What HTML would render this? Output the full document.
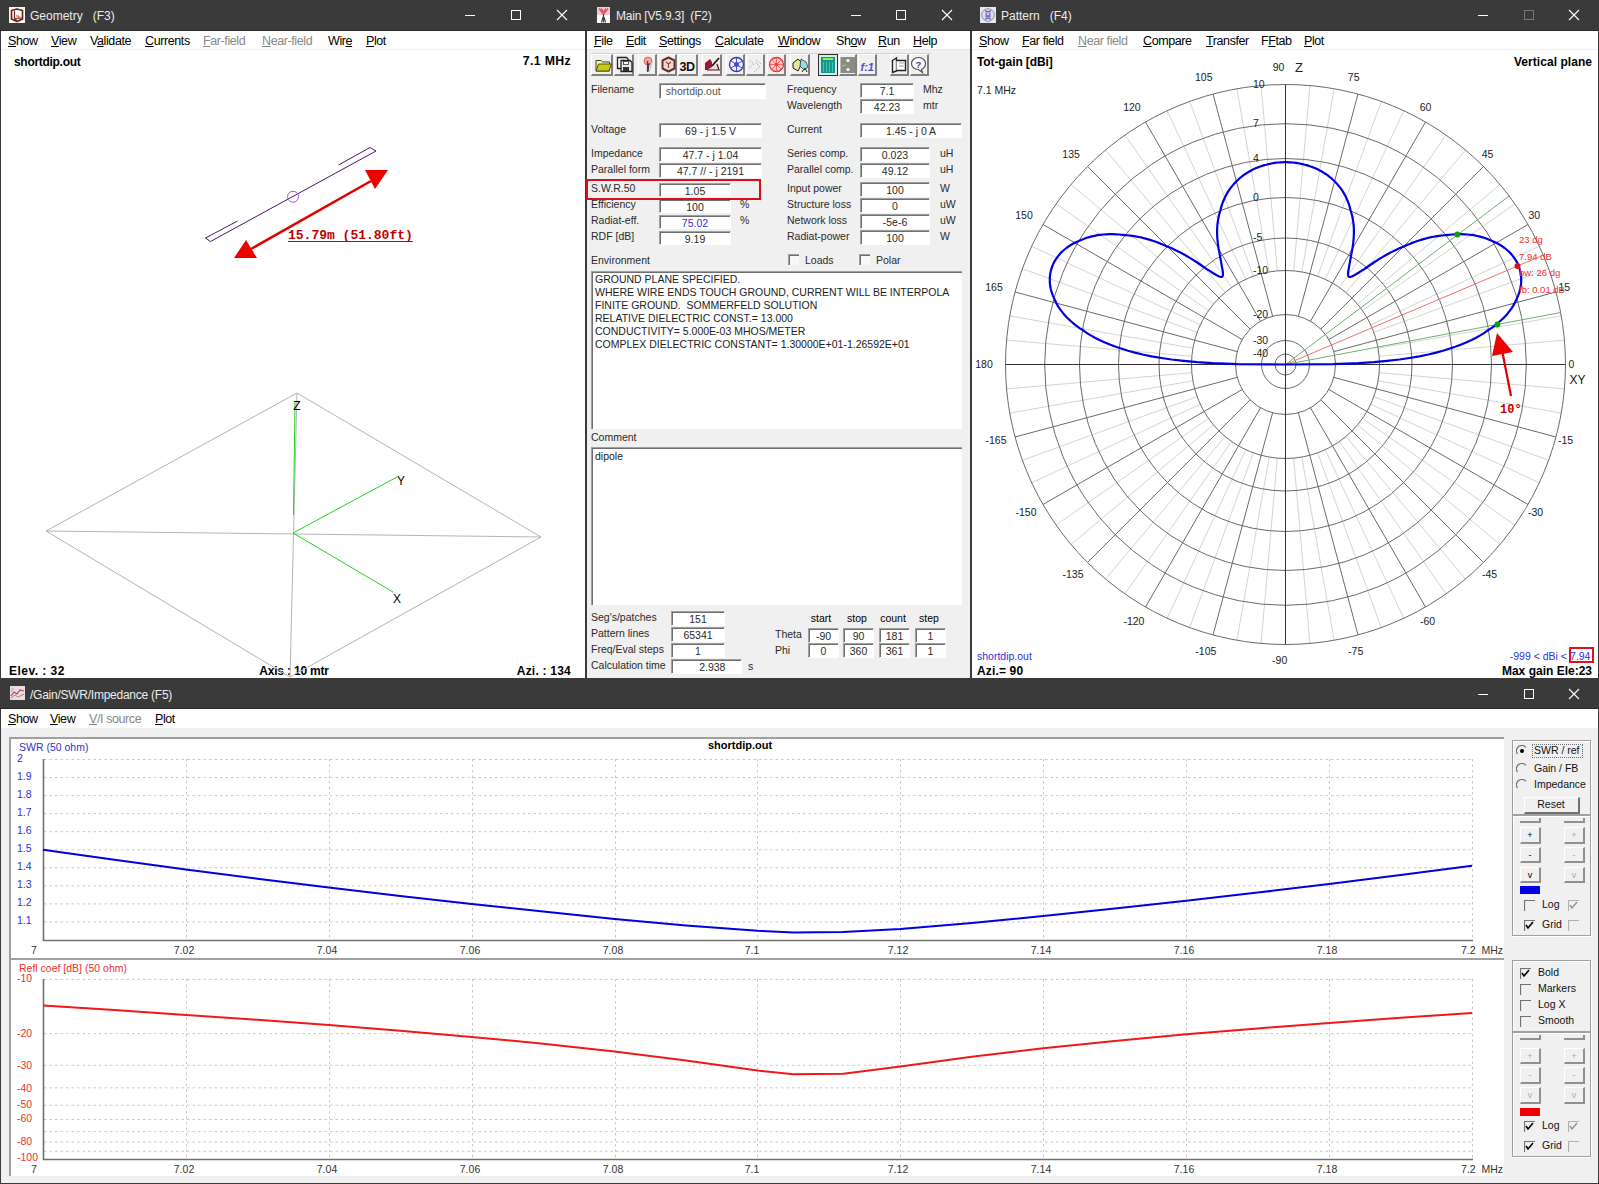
<!DOCTYPE html><html><head><meta charset="utf-8"><style>
html,body{margin:0;padding:0;}
body{width:1599px;height:1184px;overflow:hidden;position:relative;background:#3a3a3a;font-family:'Liberation Sans', sans-serif;}
.t{position:absolute;white-space:pre;line-height:1;}
u{text-decoration:underline;text-underline-offset:1px;text-decoration-skip-ink:none;}
.fld{position:absolute;background:#fff;border-top:1px solid #a0a0a0;border-left:1px solid #a0a0a0;border-right:1px solid #fff;border-bottom:1px solid #fff;box-shadow:inset 1px 1px 0 #6e6e6e;box-sizing:border-box;font-size:10.5px;line-height:15px;text-align:center;color:#000;white-space:pre;overflow:hidden;}
svg{position:absolute;}
</style></head><body><div style="position:absolute;left:0px;top:30px;width:1599px;height:1px;background:#2a2a2a"></div><div style="position:absolute;left:0px;top:708px;width:1599px;height:1px;background:#2a2a2a"></div><div style="position:absolute;left:1px;top:31px;width:584px;height:647px;background:#fff"></div><div style="position:absolute;left:1px;top:49px;width:584px;height:1px;background:#f0f0f0"></div><svg style="left:9px;top:7px" width="16" height="16"><rect x="0" y="0" width="16" height="16" fill="#fbf6f4"/><path d="M2.5 3.5L8 2L13.5 3.5V12L8 14.5L2.5 12Z" stroke="#5a2418" stroke-width="1.6" fill="none" stroke-linejoin="round"/><path d="M5.5 4V11.5M5.5 11.5L8 14M5.5 11.5L13 11" stroke="#6a2a20" stroke-width="1.2" fill="none"/><path d="M7 9h3v3" stroke="#b05050" stroke-width="1" fill="none"/></svg><div class="t" style="left:30px;top:9.5px;font-size:12px;color:#ececec;font-weight:400;font-family:'Liberation Sans', sans-serif;">Geometry &nbsp;&nbsp;(F3)</div><div style="position:absolute;left:465px;top:15px;width:10px;height:1px;background:#fff"></div><div style="position:absolute;left:511px;top:10px;width:8px;height:8px;border:1px solid #fff"></div><svg style="position:absolute;left:556px;top:9px" width="12" height="12"><path d="M1 1L11 11M11 1L1 11" stroke="#fff" stroke-width="1.1"/></svg><div class="t" style="left:8px;top:35px;font-size:12.5px;color:#000;font-weight:400;font-family:'Liberation Sans', sans-serif;letter-spacing:-0.4px"><u>S</u>how</div><div class="t" style="left:51px;top:35px;font-size:12.5px;color:#000;font-weight:400;font-family:'Liberation Sans', sans-serif;letter-spacing:-0.4px"><u>V</u>iew</div><div class="t" style="left:90px;top:35px;font-size:12.5px;color:#000;font-weight:400;font-family:'Liberation Sans', sans-serif;letter-spacing:-0.4px">V<u>a</u>lidate</div><div class="t" style="left:145px;top:35px;font-size:12.5px;color:#000;font-weight:400;font-family:'Liberation Sans', sans-serif;letter-spacing:-0.4px"><u>C</u>urrents</div><div class="t" style="left:203px;top:35px;font-size:12.5px;color:#888;font-weight:400;font-family:'Liberation Sans', sans-serif;letter-spacing:-0.4px"><u>F</u>ar-field</div><div class="t" style="left:262px;top:35px;font-size:12.5px;color:#888;font-weight:400;font-family:'Liberation Sans', sans-serif;letter-spacing:-0.4px"><u>N</u>ear-field</div><div class="t" style="left:328px;top:35px;font-size:12.5px;color:#000;font-weight:400;font-family:'Liberation Sans', sans-serif;letter-spacing:-0.4px">Wir<u>e</u></div><div class="t" style="left:366px;top:35px;font-size:12.5px;color:#000;font-weight:400;font-family:'Liberation Sans', sans-serif;letter-spacing:-0.4px"><u>P</u>lot</div><div class="t" style="left:14px;top:56px;font-size:12px;color:#000;font-weight:700;font-family:'Liberation Sans', sans-serif;letter-spacing:-0.3px">shortdip.out</div><div class="t" style="right:1028px;top:55.4px;font-size:12.3px;color:#000;font-weight:700;font-family:'Liberation Sans', sans-serif;letter-spacing:0.35px">7.1 MHz</div><div class="t" style="left:9px;top:664.5px;font-size:12px;color:#000;font-weight:700;font-family:'Liberation Sans', sans-serif;letter-spacing:0.47px">Elev. : 32</div><div class="t" style="left:294px;transform:translateX(-50%);top:664.5px;font-size:12px;color:#000;font-weight:700;font-family:'Liberation Sans', sans-serif;letter-spacing:-0.18px">Axis : 10 mtr</div><div class="t" style="right:1028px;top:664.5px;font-size:12px;color:#000;font-weight:700;font-family:'Liberation Sans', sans-serif;letter-spacing:0.22px">Azi. : 134</div><svg style="left:0;top:0" width="586" height="678"><path d="M46 531L297 393L541 537L290 677" stroke="#b4b4b4" stroke-width="1" fill="none"/><path d="M46 531L290 677" stroke="#b4b4b4" stroke-width="1" fill="none"/><path d="M46 531L541 537M297 393L290 677" stroke="#b4b4b4" stroke-width="1" fill="none"/><path d="M293.5 515L295 402M293 533L397 477M293 533L393 592" stroke="#20d020" stroke-width="1" fill="none"/><path d="M205.5 238L210.5 241.5L376 151L370 147.5L338.5 165M205.5 238L237.5 221" stroke="#4a1868" stroke-width="1" fill="none" stroke-linejoin="round"/><circle cx="293" cy="196.7" r="5.5" stroke="#b050f0" stroke-width="1" fill="none"/><path d="M251 249L371 181" stroke="#e00000" stroke-width="2.5"/><path d="M234 258L257 258L246 240Z M365 170L388 170L375 189Z" fill="#ee0000"/></svg><div class="t" style="left:297px;transform:translateX(-50%);top:400px;font-size:12px;color:#000;font-weight:400;font-family:'Liberation Sans', sans-serif;">Z</div><div class="t" style="left:401px;transform:translateX(-50%);top:475px;font-size:12px;color:#000;font-weight:400;font-family:'Liberation Sans', sans-serif;">Y</div><div class="t" style="left:397px;transform:translateX(-50%);top:593px;font-size:12px;color:#000;font-weight:400;font-family:'Liberation Sans', sans-serif;">X</div><div class="t" style="left:288px;top:229px;font-size:13px;color:#c00000;font-weight:700;font-family:'Liberation Mono', monospace;"><u style="text-underline-offset:2px">15.79m (51.80ft)</u></div><div style="position:absolute;left:587px;top:31px;width:383px;height:647px;background:#f0f0f0"></div><div style="position:absolute;left:587px;top:31px;width:383px;height:18px;background:#fff"></div><div style="position:absolute;left:587px;top:49px;width:383px;height:1px;background:#e8e8e8"></div><svg style="left:597px;top:7px" width="13" height="16"><rect x="0" y="0" width="13" height="16" fill="#fafafa"/><rect x="0" y="0" width="13" height="8" fill="#f8c8cc"/><path d="M2 1.5L6.5 7.5L11 1.5M4 1.5L6.5 5M9 1.5L6.5 5" stroke="#e05060" stroke-width="1.3" fill="none"/><path d="M6.5 7v8.5M4.5 15.5L6 10M8.5 15.5L7 10" stroke="#4a3a3a" stroke-width="1.1" fill="none"/></svg><div class="t" style="left:616px;top:9.5px;font-size:12px;color:#ececec;font-weight:400;font-family:'Liberation Sans', sans-serif;letter-spacing:-0.2px">Main [V5.9.3] &nbsp;(F2)</div><div style="position:absolute;left:851px;top:15px;width:10px;height:1px;background:#fff"></div><div style="position:absolute;left:896px;top:10px;width:8px;height:8px;border:1px solid #fff"></div><svg style="position:absolute;left:941px;top:9px" width="12" height="12"><path d="M1 1L11 11M11 1L1 11" stroke="#fff" stroke-width="1.1"/></svg><div class="t" style="left:594px;top:35px;font-size:12.5px;color:#000;font-weight:400;font-family:'Liberation Sans', sans-serif;letter-spacing:-0.4px"><u>F</u>ile</div><div class="t" style="left:626px;top:35px;font-size:12.5px;color:#000;font-weight:400;font-family:'Liberation Sans', sans-serif;letter-spacing:-0.4px"><u>E</u>dit</div><div class="t" style="left:659px;top:35px;font-size:12.5px;color:#000;font-weight:400;font-family:'Liberation Sans', sans-serif;letter-spacing:-0.4px"><u>S</u>ettings</div><div class="t" style="left:715px;top:35px;font-size:12.5px;color:#000;font-weight:400;font-family:'Liberation Sans', sans-serif;letter-spacing:-0.4px"><u>C</u>alculate</div><div class="t" style="left:778px;top:35px;font-size:12.5px;color:#000;font-weight:400;font-family:'Liberation Sans', sans-serif;letter-spacing:-0.4px"><u>W</u>indow</div><div class="t" style="left:836px;top:35px;font-size:12.5px;color:#000;font-weight:400;font-family:'Liberation Sans', sans-serif;letter-spacing:-0.4px">Sh<u>o</u>w</div><div class="t" style="left:878px;top:35px;font-size:12.5px;color:#000;font-weight:400;font-family:'Liberation Sans', sans-serif;letter-spacing:-0.4px"><u>R</u>un</div><div class="t" style="left:913px;top:35px;font-size:12.5px;color:#000;font-weight:400;font-family:'Liberation Sans', sans-serif;letter-spacing:-0.4px"><u>H</u>elp</div><div style="position:absolute;left:591px;top:54px;width:22px;height:22px;box-sizing:border-box;border-top:1px solid #fff;border-left:1px solid #fff;border-right:2px solid #808080;border-bottom:2px solid #808080;background:#f0f0f0"></div><div style="position:absolute;left:614px;top:54px;width:20px;height:22px;box-sizing:border-box;border-top:1px solid #fff;border-left:1px solid #fff;border-right:2px solid #808080;border-bottom:2px solid #808080;background:#f0f0f0"></div><div style="position:absolute;left:638px;top:54px;width:19px;height:22px;box-sizing:border-box;border-top:1px solid #fff;border-left:1px solid #fff;border-right:2px solid #808080;border-bottom:2px solid #808080;background:#f0f0f0"></div><div style="position:absolute;left:658px;top:54px;width:19px;height:22px;box-sizing:border-box;border-top:1px solid #fff;border-left:1px solid #fff;border-right:2px solid #808080;border-bottom:2px solid #808080;background:#f0f0f0"></div><div style="position:absolute;left:678px;top:54px;width:20px;height:22px;box-sizing:border-box;border-top:1px solid #fff;border-left:1px solid #fff;border-right:2px solid #808080;border-bottom:2px solid #808080;background:#f0f0f0"></div><div style="position:absolute;left:702px;top:54px;width:20px;height:22px;box-sizing:border-box;border-top:1px solid #fff;border-left:1px solid #fff;border-right:2px solid #808080;border-bottom:2px solid #808080;background:#f0f0f0"></div><div style="position:absolute;left:726px;top:54px;width:19px;height:22px;box-sizing:border-box;border-top:1px solid #fff;border-left:1px solid #fff;border-right:2px solid #808080;border-bottom:2px solid #808080;background:#f0f0f0"></div><div style="position:absolute;left:746px;top:54px;width:19px;height:22px;box-sizing:border-box;border-top:1px solid #fff;border-left:1px solid #fff;border-right:2px solid #808080;border-bottom:2px solid #808080;background:#f0f0f0"></div><div style="position:absolute;left:767px;top:54px;width:19px;height:22px;box-sizing:border-box;border-top:1px solid #fff;border-left:1px solid #fff;border-right:2px solid #808080;border-bottom:2px solid #808080;background:#f0f0f0"></div><div style="position:absolute;left:790px;top:54px;width:20px;height:22px;box-sizing:border-box;border-top:1px solid #fff;border-left:1px solid #fff;border-right:2px solid #808080;border-bottom:2px solid #808080;background:#f0f0f0"></div><div style="position:absolute;left:818px;top:54px;width:19px;height:22px;box-sizing:border-box;border-top:1px solid #fff;border-left:1px solid #fff;border-right:2px solid #808080;border-bottom:2px solid #808080;background:#f0f0f0"></div><div style="position:absolute;left:839px;top:54px;width:18px;height:22px;box-sizing:border-box;border-top:1px solid #fff;border-left:1px solid #fff;border-right:2px solid #808080;border-bottom:2px solid #808080;background:#f0f0f0"></div><div style="position:absolute;left:858px;top:54px;width:19px;height:22px;box-sizing:border-box;border-top:1px solid #fff;border-left:1px solid #fff;border-right:2px solid #808080;border-bottom:2px solid #808080;background:#f0f0f0"></div><div style="position:absolute;left:890px;top:54px;width:19px;height:22px;box-sizing:border-box;border-top:1px solid #fff;border-left:1px solid #fff;border-right:2px solid #808080;border-bottom:2px solid #808080;background:#f0f0f0"></div><div style="position:absolute;left:910px;top:54px;width:19px;height:22px;box-sizing:border-box;border-top:1px solid #fff;border-left:1px solid #fff;border-right:2px solid #808080;border-bottom:2px solid #808080;background:#f0f0f0"></div><svg style="left:0;top:0" width="970" height="80"><path d="M591 53.5H931" stroke="#d4d4d4" stroke-width="1"/><path d="M596 60.5h5l1.5 1.5h7v9h-13.5z" fill="#f4f4c0" stroke="#404020" stroke-width="1"/><path d="M596 71l2.5-7h13l-2.5 7z" fill="#c8cc10" stroke="#505010" stroke-width="1"/><path d="M617.5 57.5h9l2 2v9h-11z" fill="#f8f8f8" stroke="#202020" stroke-width="1.3"/><path d="M621 60.5h9l2 2v9h-11z" fill="#e8e8e8" stroke="#202020" stroke-width="1.3"/><rect x="623.5" y="61.5" width="5" height="3" fill="#fff" stroke="#333" stroke-width="0.8"/><rect x="623" y="67" width="6" height="4" fill="#333"/><circle cx="648" cy="61" r="4" fill="#f4a0a0" stroke="#e05050" stroke-width="0.8"/><path d="M647.5 61v11M649 63l-1 9" stroke="#404040" stroke-width="1.2"/><path d="M652 62l-3 10" stroke="#c0c0c0" stroke-width="1"/><path d="M668.5 57.5l6 3v8l-6 3l-6-3v-8z" fill="#f0d8d0" stroke="#6a3028" stroke-width="2" stroke-linejoin="round"/><path d="M666 62l2.5 2l2.5-2M668.5 64v4" stroke="#8a4a40" stroke-width="1.2" fill="none"/><text x="679.5" y="71" font-family="Liberation Sans" font-weight="700" font-size="12.5" fill="#111" letter-spacing="-0.5">3D</text><path d="M705 63l5-4l2 3v8h-7z" fill="#a01830"/><path d="M707 70h12l-2-6" stroke="#401018" stroke-width="1.2" fill="#f0d8e0"/><path d="M712 66l7-8" stroke="#301010" stroke-width="1.8"/><circle cx="736.5" cy="64.5" r="7" fill="#eef" stroke="#3838a0" stroke-width="1.3"/><path d="M736.5 58v13M731 61l11 7M742 61l-11 7" stroke="#4040d0" stroke-width="0.9"/><circle cx="736.5" cy="64.5" r="2.5" fill="#4a4ad0"/><path d="M749 68l5-4l-5-4M754 72l6-5l-5-5M756 60l5 4" stroke="#b0b0b0" stroke-width="1" stroke-dasharray="1.5 1" fill="none"/><circle cx="776.5" cy="64.5" r="7" fill="#fcd0d0" stroke="#e83030" stroke-width="1.3"/><path d="M769.5 64.5h14M776.5 57.5v14M771.5 59.5l10 10M781.5 59.5l-10 10" stroke="#f06060" stroke-width="0.9"/><circle cx="776.5" cy="64.5" r="2" fill="#f04040"/><path d="M793 63l5-4l4 4l-4 8l-5-3z" fill="#e8e890" stroke="#202020" stroke-width="1"/><path d="M801 59l5 3l2 5l-4 3l-4-4z" fill="#90e0f0" stroke="#303030" stroke-width="0.8"/><path d="M802 72l3-4l2 4" stroke="#202020" stroke-width="1" fill="none"/><rect x="818.5" y="54.5" width="19" height="21" fill="#d8e8e8" stroke="#303030" stroke-width="1"/><rect x="821" y="57" width="14" height="16" fill="#18968a"/><path d="M823 59h10" stroke="#70ff50" stroke-width="2"/><path d="M823.5 62v10M826.5 62v10M829.5 62v10M832.5 62v10" stroke="#40c8b8" stroke-width="0.9"/><rect x="840.5" y="57" width="15" height="16" fill="#8c8c80"/><circle cx="848" cy="60.5" r="1.6" fill="#fff"/><circle cx="848" cy="69.5" r="1.6" fill="#fff"/><path d="M842 66l4-1" stroke="#c0c090" stroke-width="1"/><text x="860.5" y="71" font-family="Liberation Sans" font-style="italic" font-weight="700" font-size="11" fill="#5050c8">f:1</text><path d="M892.5 60.5l4-2.5v13l-4 1.5z" fill="#fff" stroke="#202020" stroke-width="1.4"/><path d="M896.5 60.5h9v10h-9" fill="#fff" stroke="#202020" stroke-width="1.4"/><path d="M899 63h5M899 66h5" stroke="#888" stroke-width="0.8"/><path d="M918.5 57.5c4 0 7 2.5 7 6c0 3-2 5-4 6l1 3l-4-3c-4 0-7-2.5-7-6s3-6 7-6z" fill="#fff" stroke="#505050" stroke-width="1.2"/><text x="915.5" y="67.5" font-family="Liberation Sans" font-weight="700" font-size="9.5" fill="#3030c0">?</text></svg><div class="t" style="left:591px;top:84px;font-size:10.5px;color:#2a2a2a;font-weight:400;font-family:'Liberation Sans', sans-serif;">Filename</div><div class="fld" style="left:659px;top:83px;width:107px;height:16px;color:#555;text-align:left">&nbsp;&nbsp;shortdip.out</div><div class="t" style="left:787px;top:84px;font-size:10.5px;color:#2a2a2a;font-weight:400;font-family:'Liberation Sans', sans-serif;">Frequency</div><div class="fld" style="left:860px;top:83px;width:54px;height:15px;color:#2a2a2a;text-align:center">7.1</div><div class="t" style="left:923px;top:84px;font-size:10.5px;color:#2a2a2a;font-weight:400;font-family:'Liberation Sans', sans-serif;">Mhz</div><div class="t" style="left:787px;top:100px;font-size:10.5px;color:#2a2a2a;font-weight:400;font-family:'Liberation Sans', sans-serif;">Wavelength</div><div class="fld" style="left:860px;top:99px;width:54px;height:15px;color:#2a2a2a;text-align:center">42.23</div><div class="t" style="left:923px;top:100px;font-size:10.5px;color:#2a2a2a;font-weight:400;font-family:'Liberation Sans', sans-serif;">mtr</div><div class="t" style="left:591px;top:124px;font-size:10.5px;color:#2a2a2a;font-weight:400;font-family:'Liberation Sans', sans-serif;">Voltage</div><div class="fld" style="left:659px;top:123px;width:103px;height:15px;color:#2a2a2a;text-align:center">69 - j 1.5 V</div><div class="t" style="left:787px;top:124px;font-size:10.5px;color:#2a2a2a;font-weight:400;font-family:'Liberation Sans', sans-serif;">Current</div><div class="fld" style="left:860px;top:123px;width:102px;height:15px;color:#2a2a2a;text-align:center">1.45 - j 0 A</div><div class="t" style="left:591px;top:148px;font-size:10.5px;color:#2a2a2a;font-weight:400;font-family:'Liberation Sans', sans-serif;">Impedance</div><div class="fld" style="left:659px;top:147px;width:103px;height:15px;color:#2a2a2a;text-align:center">47.7 - j 1.04</div><div class="t" style="left:591px;top:164px;font-size:10.5px;color:#2a2a2a;font-weight:400;font-family:'Liberation Sans', sans-serif;">Parallel form</div><div class="fld" style="left:659px;top:163px;width:103px;height:15px;color:#2a2a2a;text-align:center">47.7 // - j 2191</div><div class="t" style="left:591px;top:183px;font-size:10.5px;color:#2a2a2a;font-weight:400;font-family:'Liberation Sans', sans-serif;">S.W.R.50</div><div class="fld" style="left:659px;top:183px;width:72px;height:14px;color:#2a2a2a;text-align:center">1.05</div><div class="t" style="left:591px;top:199px;font-size:10.5px;color:#2a2a2a;font-weight:400;font-family:'Liberation Sans', sans-serif;">Efficiency</div><div class="fld" style="left:659px;top:199px;width:72px;height:14px;color:#2a2a2a;text-align:center">100</div><div class="t" style="left:740px;top:199px;font-size:10.5px;color:#2a2a2a;font-weight:400;font-family:'Liberation Sans', sans-serif;">%</div><div class="t" style="left:591px;top:215px;font-size:10.5px;color:#2a2a2a;font-weight:400;font-family:'Liberation Sans', sans-serif;">Radiat-eff.</div><div class="fld" style="left:659px;top:215px;width:72px;height:14px;color:#3030e0;text-align:center">75.02</div><div class="t" style="left:740px;top:215px;font-size:10.5px;color:#2a2a2a;font-weight:400;font-family:'Liberation Sans', sans-serif;">%</div><div class="t" style="left:591px;top:231px;font-size:10.5px;color:#2a2a2a;font-weight:400;font-family:'Liberation Sans', sans-serif;">RDF [dB]</div><div class="fld" style="left:659px;top:231px;width:72px;height:14px;color:#2a2a2a;text-align:center">9.19</div><div style="position:absolute;left:586px;top:179px;width:175px;height:21px;box-sizing:border-box;border:2px solid #d8101c"></div><div class="t" style="left:787px;top:148px;font-size:10.5px;color:#2a2a2a;font-weight:400;font-family:'Liberation Sans', sans-serif;">Series comp.</div><div class="fld" style="left:860px;top:147px;width:70px;height:15px;color:#2a2a2a;text-align:center">0.023</div><div class="t" style="left:940px;top:148px;font-size:10.5px;color:#2a2a2a;font-weight:400;font-family:'Liberation Sans', sans-serif;">uH</div><div class="t" style="left:787px;top:164px;font-size:10.5px;color:#2a2a2a;font-weight:400;font-family:'Liberation Sans', sans-serif;">Parallel comp.</div><div class="fld" style="left:860px;top:163px;width:70px;height:15px;color:#2a2a2a;text-align:center">49.12</div><div class="t" style="left:940px;top:164px;font-size:10.5px;color:#2a2a2a;font-weight:400;font-family:'Liberation Sans', sans-serif;">uH</div><div class="t" style="left:787px;top:183px;font-size:10.5px;color:#2a2a2a;font-weight:400;font-family:'Liberation Sans', sans-serif;">Input power</div><div class="fld" style="left:860px;top:182px;width:70px;height:15px;color:#2a2a2a;text-align:center">100</div><div class="t" style="left:940px;top:183px;font-size:10.5px;color:#2a2a2a;font-weight:400;font-family:'Liberation Sans', sans-serif;">W</div><div class="t" style="left:787px;top:199px;font-size:10.5px;color:#2a2a2a;font-weight:400;font-family:'Liberation Sans', sans-serif;">Structure loss</div><div class="fld" style="left:860px;top:198px;width:70px;height:15px;color:#2a2a2a;text-align:center">0</div><div class="t" style="left:940px;top:199px;font-size:10.5px;color:#2a2a2a;font-weight:400;font-family:'Liberation Sans', sans-serif;">uW</div><div class="t" style="left:787px;top:215px;font-size:10.5px;color:#2a2a2a;font-weight:400;font-family:'Liberation Sans', sans-serif;">Network loss</div><div class="fld" style="left:860px;top:214px;width:70px;height:15px;color:#2a2a2a;text-align:center">-5e-6</div><div class="t" style="left:940px;top:215px;font-size:10.5px;color:#2a2a2a;font-weight:400;font-family:'Liberation Sans', sans-serif;">uW</div><div class="t" style="left:787px;top:231px;font-size:10.5px;color:#2a2a2a;font-weight:400;font-family:'Liberation Sans', sans-serif;">Radiat-power</div><div class="fld" style="left:860px;top:230px;width:70px;height:15px;color:#2a2a2a;text-align:center">100</div><div class="t" style="left:940px;top:231px;font-size:10.5px;color:#2a2a2a;font-weight:400;font-family:'Liberation Sans', sans-serif;">W</div><div class="t" style="left:591px;top:255px;font-size:10.5px;color:#2a2a2a;font-weight:400;font-family:'Liberation Sans', sans-serif;">Environment</div><div style="position:absolute;left:788px;top:254px;width:11px;height:11px;box-sizing:border-box;border-top:1px solid #a0a0a0;border-left:1px solid #a0a0a0;box-shadow:inset 1px 1px 0 #6e6e6e;background:#f8f8f8"></div><div class="t" style="left:805px;top:255px;font-size:10.5px;color:#2a2a2a;font-weight:400;font-family:'Liberation Sans', sans-serif;">Loads</div><div style="position:absolute;left:859px;top:254px;width:11px;height:11px;box-sizing:border-box;border-top:1px solid #a0a0a0;border-left:1px solid #a0a0a0;box-shadow:inset 1px 1px 0 #6e6e6e;background:#f8f8f8"></div><div class="t" style="left:876px;top:255px;font-size:10.5px;color:#2a2a2a;font-weight:400;font-family:'Liberation Sans', sans-serif;">Polar</div><div style="position:absolute;left:591px;top:271px;width:371px;height:158px;box-sizing:border-box;border-top:1px solid #a0a0a0;border-left:1px solid #a0a0a0;box-shadow:inset 1px 1px 0 #6e6e6e;background:#fff"></div><div class="t" style="left:595px;top:274px;font-size:10.5px;color:#222;font-weight:400;font-family:'Liberation Sans', sans-serif;">GROUND PLANE SPECIFIED.</div><div class="t" style="left:595px;top:287px;font-size:10.5px;color:#222;font-weight:400;font-family:'Liberation Sans', sans-serif;">WHERE WIRE ENDS TOUCH GROUND, CURRENT WILL BE INTERPOLA</div><div class="t" style="left:595px;top:300px;font-size:10.5px;color:#222;font-weight:400;font-family:'Liberation Sans', sans-serif;">FINITE GROUND.  SOMMERFELD SOLUTION</div><div class="t" style="left:595px;top:313px;font-size:10.5px;color:#222;font-weight:400;font-family:'Liberation Sans', sans-serif;">RELATIVE DIELECTRIC CONST.= 13.000</div><div class="t" style="left:595px;top:326px;font-size:10.5px;color:#222;font-weight:400;font-family:'Liberation Sans', sans-serif;">CONDUCTIVITY= 5.000E-03 MHOS/METER</div><div class="t" style="left:595px;top:339px;font-size:10.5px;color:#222;font-weight:400;font-family:'Liberation Sans', sans-serif;">COMPLEX DIELECTRIC CONSTANT= 1.30000E+01-1.26592E+01</div><div class="t" style="left:591px;top:432px;font-size:10.5px;color:#2a2a2a;font-weight:400;font-family:'Liberation Sans', sans-serif;">Comment</div><div style="position:absolute;left:591px;top:447px;width:371px;height:158px;box-sizing:border-box;border-top:1px solid #a0a0a0;border-left:1px solid #a0a0a0;box-shadow:inset 1px 1px 0 #6e6e6e;background:#fff"></div><div class="t" style="left:595px;top:451px;font-size:10.5px;color:#222;font-weight:400;font-family:'Liberation Sans', sans-serif;">dipole</div><div class="t" style="left:591px;top:612px;font-size:10.5px;color:#2a2a2a;font-weight:400;font-family:'Liberation Sans', sans-serif;">Seg's/patches</div><div class="fld" style="left:671px;top:611px;width:54px;height:15px;color:#2a2a2a;text-align:center">151</div><div class="t" style="left:591px;top:628px;font-size:10.5px;color:#2a2a2a;font-weight:400;font-family:'Liberation Sans', sans-serif;">Pattern lines</div><div class="fld" style="left:671px;top:627px;width:54px;height:15px;color:#2a2a2a;text-align:center">65341</div><div class="t" style="left:591px;top:644px;font-size:10.5px;color:#2a2a2a;font-weight:400;font-family:'Liberation Sans', sans-serif;">Freq/Eval steps</div><div class="fld" style="left:671px;top:643px;width:54px;height:15px;color:#2a2a2a;text-align:center">1</div><div class="t" style="left:591px;top:660px;font-size:10.5px;color:#2a2a2a;font-weight:400;font-family:'Liberation Sans', sans-serif;">Calculation time</div><div class="fld" style="left:671px;top:659px;width:71px;height:15px;color:#2a2a2a;text-align:center">&nbsp;&nbsp;&nbsp;&nbsp;2.938</div><div class="t" style="left:748px;top:661px;font-size:10.5px;color:#2a2a2a;font-weight:400;font-family:'Liberation Sans', sans-serif;">s</div><div class="t" style="left:821px;transform:translateX(-50%);top:613px;font-size:10.5px;color:#000;font-weight:400;font-family:'Liberation Sans', sans-serif;">start</div><div class="t" style="left:857px;transform:translateX(-50%);top:613px;font-size:10.5px;color:#000;font-weight:400;font-family:'Liberation Sans', sans-serif;">stop</div><div class="t" style="left:893px;transform:translateX(-50%);top:613px;font-size:10.5px;color:#000;font-weight:400;font-family:'Liberation Sans', sans-serif;">count</div><div class="t" style="left:929px;transform:translateX(-50%);top:613px;font-size:10.5px;color:#000;font-weight:400;font-family:'Liberation Sans', sans-serif;">step</div><div class="t" style="left:775px;top:629px;font-size:10.5px;color:#2a2a2a;font-weight:400;font-family:'Liberation Sans', sans-serif;">Theta</div><div class="t" style="left:775px;top:645px;font-size:10.5px;color:#2a2a2a;font-weight:400;font-family:'Liberation Sans', sans-serif;">Phi</div><div class="fld" style="left:808px;top:628px;width:31px;height:15px;color:#2a2a2a;text-align:center">-90</div><div class="fld" style="left:808px;top:643px;width:31px;height:15px;color:#2a2a2a;text-align:center">0</div><div class="fld" style="left:843px;top:628px;width:31px;height:15px;color:#2a2a2a;text-align:center">90</div><div class="fld" style="left:843px;top:643px;width:31px;height:15px;color:#2a2a2a;text-align:center">360</div><div class="fld" style="left:879px;top:628px;width:31px;height:15px;color:#2a2a2a;text-align:center">181</div><div class="fld" style="left:879px;top:643px;width:31px;height:15px;color:#2a2a2a;text-align:center">361</div><div class="fld" style="left:915px;top:628px;width:31px;height:15px;color:#2a2a2a;text-align:center">1</div><div class="fld" style="left:915px;top:643px;width:31px;height:15px;color:#2a2a2a;text-align:center">1</div><div style="position:absolute;left:972px;top:31px;width:626px;height:647px;background:#fff"></div><div style="position:absolute;left:972px;top:49px;width:626px;height:1px;background:#f0f0f0"></div><svg style="left:980px;top:7px" width="16" height="16"><rect x="0" y="0" width="16" height="16" fill="#e8e8ec"/><circle cx="8" cy="8" r="6.3" fill="#dcdcf0" stroke="#9090a0" stroke-width="1"/><path d="M5 3.5Q8 6 11 3.5M5 12.5Q8 10 11 12.5" stroke="#6060b0" stroke-width="1.2" fill="none"/><rect x="5.5" y="5.5" width="5" height="5" fill="#7070d0"/><circle cx="8" cy="7" r="1.3" fill="#d0d0ff"/></svg><div class="t" style="left:1001px;top:9.5px;font-size:12px;color:#ececec;font-weight:400;font-family:'Liberation Sans', sans-serif;">Pattern &nbsp;&nbsp;(F4)</div><div style="position:absolute;left:1478px;top:15px;width:10px;height:1px;background:#fff"></div><div style="position:absolute;left:1524px;top:10px;width:8px;height:8px;border:1px solid #777"></div><svg style="position:absolute;left:1568px;top:9px" width="12" height="12"><path d="M1 1L11 11M11 1L1 11" stroke="#fff" stroke-width="1.1"/></svg><div class="t" style="left:979px;top:35px;font-size:12.5px;color:#000;font-weight:400;font-family:'Liberation Sans', sans-serif;letter-spacing:-0.4px"><u>S</u>how</div><div class="t" style="left:1022px;top:35px;font-size:12.5px;color:#000;font-weight:400;font-family:'Liberation Sans', sans-serif;letter-spacing:-0.4px"><u>F</u>ar field</div><div class="t" style="left:1078px;top:35px;font-size:12.5px;color:#888;font-weight:400;font-family:'Liberation Sans', sans-serif;letter-spacing:-0.4px"><u>N</u>ear field</div><div class="t" style="left:1143px;top:35px;font-size:12.5px;color:#000;font-weight:400;font-family:'Liberation Sans', sans-serif;letter-spacing:-0.4px"><u>C</u>ompare</div><div class="t" style="left:1206px;top:35px;font-size:12.5px;color:#000;font-weight:400;font-family:'Liberation Sans', sans-serif;letter-spacing:-0.4px"><u>T</u>ransfer</div><div class="t" style="left:1261px;top:35px;font-size:12.5px;color:#000;font-weight:400;font-family:'Liberation Sans', sans-serif;letter-spacing:-0.4px">F<u>F</u>tab</div><div class="t" style="left:1304px;top:35px;font-size:12.5px;color:#000;font-weight:400;font-family:'Liberation Sans', sans-serif;letter-spacing:-0.4px"><u>P</u>lot</div><div class="t" style="left:977px;top:55.6px;font-size:12px;color:#000;font-weight:700;font-family:'Liberation Sans', sans-serif;letter-spacing:-0.1px">Tot-gain [dBi]</div><div class="t" style="right:7px;top:55.6px;font-size:12px;color:#000;font-weight:700;font-family:'Liberation Sans', sans-serif;letter-spacing:0.05px">Vertical plane</div><div class="t" style="left:977px;top:85px;font-size:10.5px;color:#222;font-weight:400;font-family:'Liberation Sans', sans-serif;">7.1 MHz</div><svg style="left:0;top:0" width="1599" height="680"><path d="M1379.1 356.3L1564.4 340.1M1378.1 348.2L1561.2 315.9M1373.8 332.4L1548.6 268.7M1370.7 324.8L1539.3 246.2M1362.5 310.6L1514.9 203.9M1357.5 304.1L1500.0 184.5M1345.9 292.5L1465.5 150.0M1339.4 287.5L1446.1 135.1M1325.2 279.3L1403.8 110.7M1317.6 276.2L1381.3 101.4M1301.8 271.9L1334.1 88.8M1293.7 270.9L1309.9 85.6M1277.3 270.9L1261.1 85.6M1269.2 271.9L1236.9 88.8M1253.4 276.2L1189.7 101.4M1245.8 279.3L1167.2 110.7M1231.6 287.5L1124.9 135.1M1225.1 292.5L1105.5 150.0M1213.5 304.1L1071.0 184.5M1208.5 310.6L1056.1 203.9M1200.3 324.8L1031.7 246.2M1197.2 332.4L1022.4 268.7M1192.9 348.2L1009.8 315.9M1191.9 356.3L1006.6 340.1M1191.9 372.7L1006.6 388.9M1192.9 380.8L1009.8 413.1M1197.2 396.6L1022.4 460.3M1200.3 404.2L1031.7 482.8M1208.5 418.4L1056.1 525.1M1213.5 424.9L1071.0 544.5M1225.1 436.5L1105.5 579.0M1231.6 441.5L1124.9 593.9M1245.8 449.7L1167.2 618.3M1253.4 452.8L1189.7 627.6M1269.2 457.1L1236.9 640.2M1277.3 458.1L1261.1 643.4M1293.7 458.1L1309.9 643.4M1301.8 457.1L1334.1 640.2M1317.6 452.8L1381.3 627.6M1325.2 449.7L1403.8 618.3M1339.4 441.5L1446.1 593.9M1345.9 436.5L1465.5 579.0M1357.5 424.9L1500.0 544.5M1362.5 418.4L1514.9 525.1M1370.7 404.2L1539.3 482.8M1373.8 396.6L1548.6 460.3M1378.1 380.8L1561.2 413.1M1379.1 372.7L1564.4 388.9" stroke="#d4d4d4" stroke-width="1" fill="none"/><path d="M1333.8 351.6L1556.0 292.0M1328.8 339.5L1528.0 224.5M1320.9 329.1L1483.5 166.5M1310.5 321.2L1425.5 122.0M1298.4 316.2L1358.0 94.0M1272.6 316.2L1213.0 94.0M1260.5 321.2L1145.5 122.0M1250.1 329.1L1087.5 166.5M1242.2 339.5L1043.0 224.5M1237.2 351.6L1015.0 292.0M1237.2 377.4L1015.0 437.0M1242.2 389.5L1043.0 504.5M1250.1 399.9L1087.5 562.5M1260.5 407.8L1145.5 607.0M1272.6 412.8L1213.0 635.0M1298.4 412.8L1358.0 635.0M1310.5 407.8L1425.5 607.0M1320.9 399.9L1483.5 562.5M1328.8 389.5L1528.0 504.5M1333.8 377.4L1556.0 437.0" stroke="#6a6a6a" stroke-width="1" fill="none"/><circle cx="1285.5" cy="364.5" r="280" stroke="#6a6a6a" stroke-width="1" fill="none"/><circle cx="1285.5" cy="364.5" r="240.8" stroke="#6a6a6a" stroke-width="1" fill="none"/><circle cx="1285.5" cy="364.5" r="206" stroke="#6a6a6a" stroke-width="1" fill="none"/><circle cx="1285.5" cy="364.5" r="167" stroke="#6a6a6a" stroke-width="1" fill="none"/><circle cx="1285.5" cy="364.5" r="126.5" stroke="#6a6a6a" stroke-width="1" fill="none"/><circle cx="1285.5" cy="364.5" r="94" stroke="#6a6a6a" stroke-width="1" fill="none"/><circle cx="1285.5" cy="364.5" r="50" stroke="#6a6a6a" stroke-width="1" fill="none"/><circle cx="1285.5" cy="364.5" r="24" stroke="#6a6a6a" stroke-width="1" fill="none"/><circle cx="1285.5" cy="364.5" r="10.5" stroke="#6a6a6a" stroke-width="1" fill="none"/><path d="M1005.5 364.5H1565.5M1285.5 84.5V644.5" stroke="#303030" stroke-width="1" fill="none"/><path d="M1285.5 364.5L1509.1 196.0" stroke="#70b070" stroke-width="1" fill="none"/><path d="M1285.5 364.5L1560.6 312.5" stroke="#70b070" stroke-width="1" fill="none"/><path d="M1285.5 364.5L1543.2 255.1" stroke="#f07070" stroke-width="1" fill="none"/><path d="M1285.5 364.5L1333.5 364.1L1358.5 363.2L1373.8 362.2L1387.2 360.9L1399.5 359.5L1409.5 358.0L1419.4 356.3L1428.3 354.5L1436.1 352.6L1443.0 350.7L1449.1 348.7L1455.2 346.7L1461.2 344.5L1466.6 342.3L1471.6 340.0L1476.1 337.7L1480.2 335.4L1484.0 333.1L1487.4 330.7L1491.0 328.3L1494.5 325.8L1497.7 323.3L1500.6 320.7L1503.3 318.2L1505.7 315.7L1507.9 313.2L1509.9 310.6L1511.7 308.1L1513.3 305.6L1514.7 303.1L1515.9 300.6L1517.0 298.1L1518.1 295.6L1519.0 293.1L1519.8 290.6L1520.4 288.2L1520.8 285.8L1521.1 283.4L1521.2 281.0L1521.2 278.7L1521.1 276.4L1520.8 274.2L1520.4 272.0L1519.9 269.8L1519.2 267.7L1518.5 265.6L1517.6 263.6L1516.6 261.6L1515.4 259.7L1514.2 257.9L1512.9 256.1L1511.4 254.3L1509.9 252.6L1508.2 251.0L1506.5 249.5L1504.6 248.0L1502.7 246.6L1500.6 245.3L1498.5 244.0L1496.3 242.8L1493.9 241.7L1491.6 240.7L1489.2 239.7L1486.8 238.7L1484.3 237.8L1481.7 237.1L1479.1 236.4L1476.4 235.8L1473.6 235.2L1470.7 234.8L1467.8 234.5L1464.7 234.3L1461.6 234.2L1458.5 234.1L1455.2 234.3L1451.9 234.5L1448.6 234.8L1445.2 235.2L1442.0 235.5L1438.8 235.8L1435.6 236.3L1432.2 237.0L1428.8 237.7L1425.4 238.6L1421.8 239.6L1418.2 240.7L1414.6 242.0L1410.9 243.4L1407.1 245.0L1403.3 246.7L1399.8 248.1L1396.4 249.7L1392.8 251.4L1389.2 253.3L1385.6 255.2L1382.0 257.4L1378.3 259.6L1374.6 262.0L1370.9 264.5L1367.3 267.0L1364.2 269.1L1361.3 270.9L1358.5 272.7L1356.0 274.3L1353.7 275.6L1351.8 276.5L1350.3 277.0L1349.1 276.9L1348.4 276.3L1348.1 275.2L1348.0 273.5L1348.2 271.5L1348.6 269.2L1349.1 266.6L1349.6 263.9L1350.1 261.1L1350.6 258.3L1351.1 255.3L1351.8 251.9L1352.4 248.6L1352.9 245.3L1353.3 242.1L1353.6 239.0L1353.8 236.0L1353.9 233.1L1353.9 230.3L1353.8 227.5L1353.6 224.9L1353.3 222.4L1352.9 219.9L1352.5 217.5L1352.0 215.2L1351.4 213.0L1350.7 210.8L1350.1 208.4L1349.5 206.1L1348.8 203.9L1348.0 201.8L1347.1 199.7L1346.2 197.7L1345.3 195.8L1344.2 193.9L1343.2 192.1L1342.1 190.4L1340.9 188.7L1339.7 187.1L1338.5 185.6L1337.2 184.1L1335.9 182.7L1334.6 181.3L1333.2 180.0L1331.8 178.7L1330.4 177.5L1328.9 176.3L1327.5 175.2L1326.0 174.2L1324.4 173.2L1322.9 172.2L1321.3 171.3L1319.7 170.4L1318.1 169.6L1316.5 168.8L1314.8 168.1L1313.2 167.4L1311.5 166.8L1309.8 166.2L1308.2 165.6L1306.5 165.1L1304.7 164.7L1303.0 164.2L1301.3 163.9L1299.6 163.5L1297.8 163.2L1296.1 162.9L1294.3 162.7L1292.6 162.5L1290.8 162.4L1289.0 162.3L1287.3 162.2L1285.5 162.2L1283.7 162.2L1282.0 162.3L1280.2 162.4L1278.4 162.5L1276.7 162.7L1274.9 162.9L1273.2 163.2L1271.4 163.5L1269.7 163.9L1268.0 164.2L1266.3 164.7L1264.5 165.1L1262.8 165.6L1261.2 166.2L1259.5 166.8L1257.8 167.4L1256.2 168.1L1254.5 168.8L1252.9 169.6L1251.3 170.4L1249.7 171.3L1248.1 172.2L1246.6 173.2L1245.0 174.2L1243.5 175.2L1242.1 176.3L1240.6 177.5L1239.2 178.7L1237.8 180.0L1236.4 181.3L1235.1 182.7L1233.8 184.1L1232.5 185.6L1231.3 187.1L1230.1 188.7L1228.9 190.4L1227.8 192.1L1226.8 193.9L1225.7 195.8L1224.8 197.7L1223.9 199.7L1223.0 201.8L1222.2 203.9L1221.5 206.1L1220.9 208.4L1220.3 210.8L1219.6 213.0L1219.0 215.2L1218.5 217.5L1218.1 219.9L1217.7 222.4L1217.4 224.9L1217.2 227.5L1217.1 230.3L1217.1 233.1L1217.2 236.0L1217.4 239.0L1217.7 242.1L1218.1 245.3L1218.6 248.6L1219.2 251.9L1219.9 255.3L1220.4 258.3L1220.9 261.1L1221.4 263.9L1221.9 266.6L1222.4 269.2L1222.8 271.5L1223.0 273.5L1222.9 275.2L1222.6 276.3L1221.9 276.9L1220.7 277.0L1219.2 276.5L1217.3 275.6L1215.0 274.3L1212.5 272.7L1209.7 270.9L1206.8 269.1L1203.7 267.0L1200.1 264.5L1196.4 262.0L1192.7 259.6L1189.0 257.4L1185.4 255.2L1181.8 253.3L1178.2 251.4L1174.6 249.7L1171.2 248.1L1167.7 246.7L1163.9 245.0L1160.1 243.4L1156.4 242.0L1152.8 240.7L1149.2 239.6L1145.6 238.6L1142.2 237.7L1138.8 237.0L1135.4 236.3L1132.2 235.8L1129.0 235.5L1125.8 235.2L1122.4 234.8L1119.1 234.5L1115.8 234.3L1112.5 234.1L1109.4 234.2L1106.3 234.3L1103.2 234.5L1100.3 234.8L1097.4 235.2L1094.6 235.8L1091.9 236.4L1089.3 237.1L1086.7 237.8L1084.2 238.7L1081.8 239.7L1079.4 240.7L1077.1 241.7L1074.7 242.8L1072.5 244.0L1070.4 245.3L1068.3 246.6L1066.4 248.0L1064.5 249.5L1062.8 251.0L1061.1 252.6L1059.6 254.3L1058.1 256.1L1056.8 257.9L1055.6 259.7L1054.4 261.6L1053.4 263.6L1052.5 265.6L1051.8 267.7L1051.1 269.8L1050.6 272.0L1050.2 274.2L1049.9 276.4L1049.8 278.7L1049.8 281.0L1049.9 283.4L1050.2 285.8L1050.6 288.2L1051.2 290.6L1052.0 293.1L1052.9 295.6L1054.0 298.1L1055.1 300.6L1056.3 303.1L1057.7 305.6L1059.3 308.1L1061.1 310.6L1063.1 313.2L1065.3 315.7L1067.7 318.2L1070.4 320.7L1073.3 323.3L1076.5 325.8L1080.0 328.3L1083.6 330.7L1087.0 333.1L1090.8 335.4L1094.9 337.7L1099.4 340.0L1104.4 342.3L1109.8 344.5L1115.8 346.7L1121.9 348.7L1128.0 350.7L1134.9 352.6L1142.7 354.5L1151.6 356.3L1161.5 358.0L1171.5 359.5L1183.8 360.9L1197.2 362.2L1212.5 363.2L1237.5 364.1L1285.5 364.5" stroke="#0000e0" stroke-width="2.2" fill="none" stroke-linejoin="round"/><circle cx="1457.4" cy="234.5" r="3" fill="#10a010"/><circle cx="1497.4" cy="324.6" r="3" fill="#10a010"/><circle cx="1517.5" cy="266.0" r="3" fill="#e01010"/><path d="M1511 396L1502 350" stroke="#e00000" stroke-width="2.2"/><path d="M1492 356L1513 352L1497 333Z" fill="#ee0000"/></svg><div class="t" style="left:1253px;top:78.5px;font-size:10.5px;color:#222;font-weight:400;font-family:'Liberation Sans', sans-serif;">10</div><div class="t" style="left:1253px;top:117.69999999999999px;font-size:10.5px;color:#222;font-weight:400;font-family:'Liberation Sans', sans-serif;">7</div><div class="t" style="left:1253px;top:152.5px;font-size:10.5px;color:#222;font-weight:400;font-family:'Liberation Sans', sans-serif;">4</div><div class="t" style="left:1253px;top:191.5px;font-size:10.5px;color:#222;font-weight:400;font-family:'Liberation Sans', sans-serif;">0</div><div class="t" style="left:1253px;top:232.0px;font-size:10.5px;color:#222;font-weight:400;font-family:'Liberation Sans', sans-serif;">-5</div><div class="t" style="left:1253px;top:264.5px;font-size:10.5px;color:#222;font-weight:400;font-family:'Liberation Sans', sans-serif;">-10</div><div class="t" style="left:1253px;top:308.5px;font-size:10.5px;color:#222;font-weight:400;font-family:'Liberation Sans', sans-serif;">-20</div><div class="t" style="left:1253px;top:334.5px;font-size:10.5px;color:#222;font-weight:400;font-family:'Liberation Sans', sans-serif;">-30</div><div class="t" style="left:1253px;top:348.0px;font-size:10.5px;color:#222;font-weight:400;font-family:'Liberation Sans', sans-serif;">-40</div><div class="t" style="left:1278.5px;transform:translateX(-50%);top:61.900000000000006px;font-size:10.5px;color:#222;font-weight:400;font-family:'Liberation Sans', sans-serif;">90</div><div class="t" style="left:1299px;transform:translateX(-50%);top:60.900000000000006px;font-size:13px;color:#222;font-weight:400;font-family:'Liberation Sans', sans-serif;">Z</div><div class="t" style="left:1203.8px;transform:translateX(-50%);top:71.9px;font-size:10.5px;color:#222;font-weight:400;font-family:'Liberation Sans', sans-serif;">105</div><div class="t" style="left:1353.7px;transform:translateX(-50%);top:71.9px;font-size:10.5px;color:#222;font-weight:400;font-family:'Liberation Sans', sans-serif;">75</div><div class="t" style="left:1131.9px;transform:translateX(-50%);top:101.9px;font-size:10.5px;color:#222;font-weight:400;font-family:'Liberation Sans', sans-serif;">120</div><div class="t" style="left:1425.6px;transform:translateX(-50%);top:101.9px;font-size:10.5px;color:#222;font-weight:400;font-family:'Liberation Sans', sans-serif;">60</div><div class="t" style="left:1071.1px;transform:translateX(-50%);top:148.7px;font-size:10.5px;color:#222;font-weight:400;font-family:'Liberation Sans', sans-serif;">135</div><div class="t" style="left:1487.6px;transform:translateX(-50%);top:148.7px;font-size:10.5px;color:#222;font-weight:400;font-family:'Liberation Sans', sans-serif;">45</div><div class="t" style="left:1024px;transform:translateX(-50%);top:209.8px;font-size:10.5px;color:#222;font-weight:400;font-family:'Liberation Sans', sans-serif;">150</div><div class="t" style="left:1534.3px;transform:translateX(-50%);top:209.8px;font-size:10.5px;color:#222;font-weight:400;font-family:'Liberation Sans', sans-serif;">30</div><div class="t" style="left:994px;transform:translateX(-50%);top:281.8px;font-size:10.5px;color:#222;font-weight:400;font-family:'Liberation Sans', sans-serif;">165</div><div class="t" style="left:1564.3px;transform:translateX(-50%);top:281.8px;font-size:10.5px;color:#222;font-weight:400;font-family:'Liberation Sans', sans-serif;">15</div><div class="t" style="left:984px;transform:translateX(-50%);top:358.5px;font-size:10.5px;color:#222;font-weight:400;font-family:'Liberation Sans', sans-serif;">180</div><div class="t" style="left:1571.5px;transform:translateX(-50%);top:358.5px;font-size:10.5px;color:#222;font-weight:400;font-family:'Liberation Sans', sans-serif;">0</div><div class="t" style="left:996px;transform:translateX(-50%);top:435.1px;font-size:10.5px;color:#222;font-weight:400;font-family:'Liberation Sans', sans-serif;">-165</div><div class="t" style="left:1565.5px;transform:translateX(-50%);top:435.1px;font-size:10.5px;color:#222;font-weight:400;font-family:'Liberation Sans', sans-serif;">-15</div><div class="t" style="left:1026px;transform:translateX(-50%);top:507px;font-size:10.5px;color:#222;font-weight:400;font-family:'Liberation Sans', sans-serif;">-150</div><div class="t" style="left:1535.5px;transform:translateX(-50%);top:507px;font-size:10.5px;color:#222;font-weight:400;font-family:'Liberation Sans', sans-serif;">-30</div><div class="t" style="left:1073px;transform:translateX(-50%);top:568.6px;font-size:10.5px;color:#222;font-weight:400;font-family:'Liberation Sans', sans-serif;">-135</div><div class="t" style="left:1489.6px;transform:translateX(-50%);top:568.6px;font-size:10.5px;color:#222;font-weight:400;font-family:'Liberation Sans', sans-serif;">-45</div><div class="t" style="left:1133.9px;transform:translateX(-50%);top:615.8px;font-size:10.5px;color:#222;font-weight:400;font-family:'Liberation Sans', sans-serif;">-120</div><div class="t" style="left:1427.6px;transform:translateX(-50%);top:615.8px;font-size:10.5px;color:#222;font-weight:400;font-family:'Liberation Sans', sans-serif;">-60</div><div class="t" style="left:1205.8px;transform:translateX(-50%);top:645.8px;font-size:10.5px;color:#222;font-weight:400;font-family:'Liberation Sans', sans-serif;">-105</div><div class="t" style="left:1355.7px;transform:translateX(-50%);top:645.8px;font-size:10.5px;color:#222;font-weight:400;font-family:'Liberation Sans', sans-serif;">-75</div><div class="t" style="left:1279.7px;transform:translateX(-50%);top:655px;font-size:10.5px;color:#222;font-weight:400;font-family:'Liberation Sans', sans-serif;">-90</div><div class="t" style="left:1577.5px;transform:translateX(-50%);top:374px;font-size:12px;color:#111;font-weight:400;font-family:'Liberation Sans', sans-serif;">XY</div><div class="t" style="left:1519px;top:235.0px;font-size:9.5px;color:#f03030;font-weight:400;font-family:'Liberation Sans', sans-serif;">23 dg</div><div class="t" style="left:1519px;top:251.5px;font-size:9.5px;color:#f03030;font-weight:400;font-family:'Liberation Sans', sans-serif;">7.94 dB</div><div class="t" style="left:1519px;top:268.0px;font-size:9.5px;color:#f03030;font-weight:400;font-family:'Liberation Sans', sans-serif;">bw: 26 dg</div><div class="t" style="left:1519px;top:284.5px;font-size:9.5px;color:#f03030;font-weight:400;font-family:'Liberation Sans', sans-serif;">fb: 0.01 dB</div><div class="t" style="left:1500px;top:404px;font-size:12px;color:#c00000;font-weight:700;font-family:'Liberation Mono', monospace;">10°</div><div class="t" style="left:977px;top:651px;font-size:10.5px;color:#3030e0;font-weight:400;font-family:'Liberation Sans', sans-serif;">shortdip.out</div><div class="t" style="left:977px;top:664.5px;font-size:12px;color:#000;font-weight:700;font-family:'Liberation Sans', sans-serif;letter-spacing:0.15px">Azi.= 90</div><div class="t" style="right:32px;top:651px;font-size:10.5px;color:#3030e0;font-weight:400;font-family:'Liberation Sans', sans-serif;">-999 &lt; dBi &lt;</div><div class="t" style="left:1570px;top:651px;font-size:10.5px;color:#3030e0;font-weight:400;font-family:'Liberation Sans', sans-serif;">7.94</div><div style="position:absolute;left:1569px;top:647px;width:25px;height:16px;box-sizing:border-box;border:2px solid #e01020"></div><div class="t" style="right:7px;top:664.5px;font-size:12px;color:#000;font-weight:700;font-family:'Liberation Sans', sans-serif;">Max gain Ele:23</div><div style="position:absolute;left:1px;top:709px;width:1597px;height:474px;background:#f0f0f0"></div><div style="position:absolute;left:1px;top:709px;width:1597px;height:19px;background:#fff"></div><svg style="left:10px;top:686px" width="15" height="14"><rect x="0" y="0" width="15" height="14" fill="#eadce0"/><path d="M1 10L4 6L7 8L10 4L14 5" stroke="#c04050" stroke-width="1.2" fill="none"/><path d="M1 12L5 9L8 11L14 8" stroke="#909090" stroke-width="1" fill="none"/><path d="M1 3h3M1 5h2" stroke="#b0a0a8" stroke-width="0.8"/></svg><div class="t" style="left:30px;top:689px;font-size:12px;color:#ececec;font-weight:400;font-family:'Liberation Sans', sans-serif;letter-spacing:-0.25px">/Gain/SWR/Impedance (F5)</div><div style="position:absolute;left:1478px;top:694px;width:10px;height:1px;background:#fff"></div><div style="position:absolute;left:1524px;top:689px;width:8px;height:8px;border:1px solid #fff"></div><svg style="position:absolute;left:1568px;top:688px" width="12" height="12"><path d="M1 1L11 11M11 1L1 11" stroke="#fff" stroke-width="1.1"/></svg><div class="t" style="left:8px;top:713px;font-size:12.5px;color:#000;font-weight:400;font-family:'Liberation Sans', sans-serif;letter-spacing:-0.4px"><u>S</u>how</div><div class="t" style="left:50px;top:713px;font-size:12.5px;color:#000;font-weight:400;font-family:'Liberation Sans', sans-serif;letter-spacing:-0.4px"><u>V</u>iew</div><div class="t" style="left:89px;top:713px;font-size:12.5px;color:#888;font-weight:400;font-family:'Liberation Sans', sans-serif;letter-spacing:-0.4px"><u>V</u>/I source</div><div class="t" style="left:155px;top:713px;font-size:12.5px;color:#000;font-weight:400;font-family:'Liberation Sans', sans-serif;letter-spacing:-0.4px"><u>P</u>lot</div><div style="position:absolute;left:9px;top:737px;width:1495px;height:221px;box-sizing:border-box;background:#fff;border-top:2px solid #a0a0a0;border-left:2px solid #a0a0a0;"></div><svg style="left:0;top:0" width="1599" height="1184"><path d="M44 759.5H1472M44 777.55H1472M44 795.6H1472M44 813.65H1472M44 831.7H1472M44 849.75H1472M44 867.8H1472M44 885.85H1472M44 903.9H1472M44 921.95H1472M186.5 759V940M329.5 759V940M472.5 759V940M615.5 759V940M757.5 759V940M900.5 759V940M1043.5 759V940M1186.5 759V940M1329.5 759V940M1472.5 759V940" stroke="#c8c8c8" stroke-width="1" stroke-dasharray="2.5 3" fill="none"/><path d="M43.5 759V940.5H1473" stroke="#707070" stroke-width="1.6" fill="none"/><path d="M43.0 849.7L114.4 859.8L185.9 869.5L257.4 878.7L328.8 887.5L400.2 896.0L471.7 904.0L543.2 911.6L614.6 918.9L686.0 925.5L757.5 930.8L793.2 932.4L843.2 932.1L900.4 928.9L971.8 922.9L1043.3 916.0L1114.8 908.6L1186.2 900.8L1257.6 892.6L1329.1 884.0L1400.6 875.1L1472.0 865.7" stroke="#0000e0" stroke-width="2" fill="none"/></svg><div class="t" style="left:19px;top:742px;font-size:10.5px;color:#3030d0;font-weight:400;font-family:'Liberation Sans', sans-serif;">SWR (50 ohm)</div><div class="t" style="left:17px;top:753px;font-size:10.5px;color:#3030d0;font-weight:400;font-family:'Liberation Sans', sans-serif;">2</div><div class="t" style="left:17px;top:771px;font-size:10.5px;color:#3030d0;font-weight:400;font-family:'Liberation Sans', sans-serif;">1.9</div><div class="t" style="left:17px;top:789px;font-size:10.5px;color:#3030d0;font-weight:400;font-family:'Liberation Sans', sans-serif;">1.8</div><div class="t" style="left:17px;top:807px;font-size:10.5px;color:#3030d0;font-weight:400;font-family:'Liberation Sans', sans-serif;">1.7</div><div class="t" style="left:17px;top:825px;font-size:10.5px;color:#3030d0;font-weight:400;font-family:'Liberation Sans', sans-serif;">1.6</div><div class="t" style="left:17px;top:843px;font-size:10.5px;color:#3030d0;font-weight:400;font-family:'Liberation Sans', sans-serif;">1.5</div><div class="t" style="left:17px;top:861px;font-size:10.5px;color:#3030d0;font-weight:400;font-family:'Liberation Sans', sans-serif;">1.4</div><div class="t" style="left:17px;top:879px;font-size:10.5px;color:#3030d0;font-weight:400;font-family:'Liberation Sans', sans-serif;">1.3</div><div class="t" style="left:17px;top:897px;font-size:10.5px;color:#3030d0;font-weight:400;font-family:'Liberation Sans', sans-serif;">1.2</div><div class="t" style="left:17px;top:915px;font-size:10.5px;color:#3030d0;font-weight:400;font-family:'Liberation Sans', sans-serif;">1.1</div><div class="t" style="left:34px;transform:translateX(-50%);top:944.5px;font-size:10.5px;color:#333;font-weight:400;font-family:'Liberation Sans', sans-serif;">7</div><div class="t" style="left:184px;transform:translateX(-50%);top:944.5px;font-size:10.5px;color:#333;font-weight:400;font-family:'Liberation Sans', sans-serif;">7.02</div><div class="t" style="left:327px;transform:translateX(-50%);top:944.5px;font-size:10.5px;color:#333;font-weight:400;font-family:'Liberation Sans', sans-serif;">7.04</div><div class="t" style="left:470px;transform:translateX(-50%);top:944.5px;font-size:10.5px;color:#333;font-weight:400;font-family:'Liberation Sans', sans-serif;">7.06</div><div class="t" style="left:613px;transform:translateX(-50%);top:944.5px;font-size:10.5px;color:#333;font-weight:400;font-family:'Liberation Sans', sans-serif;">7.08</div><div class="t" style="left:752px;transform:translateX(-50%);top:944.5px;font-size:10.5px;color:#333;font-weight:400;font-family:'Liberation Sans', sans-serif;">7.1</div><div class="t" style="left:898px;transform:translateX(-50%);top:944.5px;font-size:10.5px;color:#333;font-weight:400;font-family:'Liberation Sans', sans-serif;">7.12</div><div class="t" style="left:1041px;transform:translateX(-50%);top:944.5px;font-size:10.5px;color:#333;font-weight:400;font-family:'Liberation Sans', sans-serif;">7.14</div><div class="t" style="left:1184px;transform:translateX(-50%);top:944.5px;font-size:10.5px;color:#333;font-weight:400;font-family:'Liberation Sans', sans-serif;">7.16</div><div class="t" style="left:1327px;transform:translateX(-50%);top:944.5px;font-size:10.5px;color:#333;font-weight:400;font-family:'Liberation Sans', sans-serif;">7.18</div><div class="t" style="left:1461px;top:944.5px;font-size:10.5px;color:#333;font-weight:400;font-family:'Liberation Sans', sans-serif;">7.2 &nbsp;MHz</div><div class="t" style="left:740px;transform:translateX(-50%);top:740px;font-size:11px;color:#000;font-weight:700;font-family:'Liberation Sans', sans-serif;">shortdip.out</div><div style="position:absolute;left:9px;top:958px;width:1495px;height:218px;box-sizing:border-box;background:#fff;border-top:2px solid #a0a0a0;border-left:2px solid #a0a0a0;"></div><svg style="left:0;top:0" width="1599" height="1184"><path d="M44 979.4H1472M44 1033.615502219083H1472M44 1065.3295379750111H1472M44 1087.831004438166H1472M44 1105.284497780917H1472M44 1119.545040194094H1472M44 1131.6021570065677H1472M44 1142.046506657249H1472M44 1151.2590759500224H1472M186.5 979V1159M329.5 979V1159M472.5 979V1159M615.5 979V1159M757.5 979V1159M900.5 979V1159M1043.5 979V1159M1186.5 979V1159M1329.5 979V1159M1472.5 979V1159" stroke="#c8c8c8" stroke-width="1" stroke-dasharray="2.5 3" fill="none"/><path d="M43.5 979V1159.5H1473" stroke="#707070" stroke-width="1.6" fill="none"/><path d="M43.0 1005.6L114.4 1010.1L185.9 1014.9L257.4 1019.8L328.8 1025.1L400.2 1030.7L471.7 1036.9L543.2 1043.7L614.6 1051.5L686.0 1060.6L757.5 1070.6L793.2 1074.3L843.2 1073.8L900.4 1066.6L971.8 1056.8L1043.3 1048.2L1114.8 1040.9L1186.2 1034.3L1257.6 1028.4L1329.1 1022.9L1400.6 1017.8L1472.0 1012.9" stroke="#f01818" stroke-width="2" fill="none"/></svg><div class="t" style="left:19px;top:963px;font-size:10.5px;color:#f03030;font-weight:400;font-family:'Liberation Sans', sans-serif;">Refl coef [dB] (50 ohm)</div><div class="t" style="left:17px;top:973px;font-size:10.5px;color:#f03030;font-weight:400;font-family:'Liberation Sans', sans-serif;">-10</div><div class="t" style="left:17px;top:1028px;font-size:10.5px;color:#f03030;font-weight:400;font-family:'Liberation Sans', sans-serif;">-20</div><div class="t" style="left:17px;top:1060px;font-size:10.5px;color:#f03030;font-weight:400;font-family:'Liberation Sans', sans-serif;">-30</div><div class="t" style="left:17px;top:1083px;font-size:10.5px;color:#f03030;font-weight:400;font-family:'Liberation Sans', sans-serif;">-40</div><div class="t" style="left:17px;top:1099px;font-size:10.5px;color:#f03030;font-weight:400;font-family:'Liberation Sans', sans-serif;">-50</div><div class="t" style="left:17px;top:1113px;font-size:10.5px;color:#f03030;font-weight:400;font-family:'Liberation Sans', sans-serif;">-60</div><div class="t" style="left:17px;top:1136px;font-size:10.5px;color:#f03030;font-weight:400;font-family:'Liberation Sans', sans-serif;">-80</div><div class="t" style="left:17px;top:1152px;font-size:10.5px;color:#f03030;font-weight:400;font-family:'Liberation Sans', sans-serif;">-100</div><div class="t" style="left:34px;transform:translateX(-50%);top:1163.5px;font-size:10.5px;color:#333;font-weight:400;font-family:'Liberation Sans', sans-serif;">7</div><div class="t" style="left:184px;transform:translateX(-50%);top:1163.5px;font-size:10.5px;color:#333;font-weight:400;font-family:'Liberation Sans', sans-serif;">7.02</div><div class="t" style="left:327px;transform:translateX(-50%);top:1163.5px;font-size:10.5px;color:#333;font-weight:400;font-family:'Liberation Sans', sans-serif;">7.04</div><div class="t" style="left:470px;transform:translateX(-50%);top:1163.5px;font-size:10.5px;color:#333;font-weight:400;font-family:'Liberation Sans', sans-serif;">7.06</div><div class="t" style="left:613px;transform:translateX(-50%);top:1163.5px;font-size:10.5px;color:#333;font-weight:400;font-family:'Liberation Sans', sans-serif;">7.08</div><div class="t" style="left:752px;transform:translateX(-50%);top:1163.5px;font-size:10.5px;color:#333;font-weight:400;font-family:'Liberation Sans', sans-serif;">7.1</div><div class="t" style="left:898px;transform:translateX(-50%);top:1163.5px;font-size:10.5px;color:#333;font-weight:400;font-family:'Liberation Sans', sans-serif;">7.12</div><div class="t" style="left:1041px;transform:translateX(-50%);top:1163.5px;font-size:10.5px;color:#333;font-weight:400;font-family:'Liberation Sans', sans-serif;">7.14</div><div class="t" style="left:1184px;transform:translateX(-50%);top:1163.5px;font-size:10.5px;color:#333;font-weight:400;font-family:'Liberation Sans', sans-serif;">7.16</div><div class="t" style="left:1327px;transform:translateX(-50%);top:1163.5px;font-size:10.5px;color:#333;font-weight:400;font-family:'Liberation Sans', sans-serif;">7.18</div><div class="t" style="left:1461px;top:1163.5px;font-size:10.5px;color:#333;font-weight:400;font-family:'Liberation Sans', sans-serif;">7.2 &nbsp;MHz</div><div style="position:absolute;left:1512px;top:740px;width:79px;height:75px;box-sizing:border-box;border:1px solid #a0a0a0;box-shadow:inset 1px 1px 0 #fff, 1px 1px 0 #fff"></div><div style="position:absolute;left:1512px;top:815px;width:79px;height:121px;box-sizing:border-box;border:1px solid #a0a0a0;box-shadow:inset 1px 1px 0 #fff, 1px 1px 0 #fff"></div><svg style="left:1516px;top:745px" width="12" height="12"><path d="M10 2.5A5 5 0 0 0 1.5 9" stroke="#707070" stroke-width="1.2" fill="none"/><circle cx="6" cy="6" r="2" fill="#000"/></svg><div class="t" style="left:1534px;top:745px;font-size:10.5px;color:#111;font-weight:400;font-family:'Liberation Sans', sans-serif;">SWR / ref</div><div style="position:absolute;left:1532px;top:744px;width:51px;height:14px;box-sizing:border-box;border:1px dotted #707070"></div><svg style="left:1516px;top:763px" width="12" height="12"><path d="M10 2.5A5 5 0 0 0 1.5 9" stroke="#707070" stroke-width="1.2" fill="none"/></svg><div class="t" style="left:1534px;top:763px;font-size:10.5px;color:#111;font-weight:400;font-family:'Liberation Sans', sans-serif;">Gain / FB</div><svg style="left:1516px;top:779px" width="12" height="12"><path d="M10 2.5A5 5 0 0 0 1.5 9" stroke="#707070" stroke-width="1.2" fill="none"/></svg><div class="t" style="left:1534px;top:779px;font-size:10.5px;color:#111;font-weight:400;font-family:'Liberation Sans', sans-serif;">Impedance</div><div style="position:absolute;left:1524px;top:797px;width:56px;height:17px;box-sizing:border-box;border-right:2px solid #707070;border-bottom:2px solid #707070;border-top:1px solid #fff;border-left:1px solid #fff"></div><div class="t" style="left:1551px;transform:translateX(-50%);top:799px;font-size:10.5px;color:#111;font-weight:400;font-family:'Liberation Sans', sans-serif;">Reset</div><div style="position:absolute;left:1520px;top:818px;width:21px;height:5px;box-sizing:border-box;border-right:2px solid #909090;border-bottom:2px solid #909090"></div><div style="position:absolute;left:1520px;top:827px;width:21px;height:17px;box-sizing:border-box;border-right:2px solid #909090;border-bottom:2px solid #909090;border-top:1px solid #fff;border-left:1px solid #fff;color:#000;font-size:9px;text-align:center;line-height:14px;font-family:'Liberation Sans'">+</div><div style="position:absolute;left:1520px;top:847px;width:21px;height:16px;box-sizing:border-box;border-right:2px solid #909090;border-bottom:2px solid #909090;border-top:1px solid #fff;border-left:1px solid #fff;color:#000;font-size:9px;text-align:center;line-height:14px;font-family:'Liberation Sans'">-</div><div style="position:absolute;left:1520px;top:867px;width:21px;height:16px;box-sizing:border-box;border-right:2px solid #909090;border-bottom:2px solid #909090;border-top:1px solid #fff;border-left:1px solid #fff;color:#000;font-size:9px;text-align:center;line-height:14px;font-family:'Liberation Sans'">v</div><div style="position:absolute;left:1564px;top:818px;width:21px;height:5px;box-sizing:border-box;border-right:2px solid #909090;border-bottom:2px solid #909090"></div><div style="position:absolute;left:1564px;top:827px;width:21px;height:17px;box-sizing:border-box;border-right:2px solid #909090;border-bottom:2px solid #909090;border-top:1px solid #fff;border-left:1px solid #fff;color:#aaa;font-size:9px;text-align:center;line-height:14px;font-family:'Liberation Sans'">+</div><div style="position:absolute;left:1564px;top:847px;width:21px;height:16px;box-sizing:border-box;border-right:2px solid #909090;border-bottom:2px solid #909090;border-top:1px solid #fff;border-left:1px solid #fff;color:#aaa;font-size:9px;text-align:center;line-height:14px;font-family:'Liberation Sans'">-</div><div style="position:absolute;left:1564px;top:867px;width:21px;height:16px;box-sizing:border-box;border-right:2px solid #909090;border-bottom:2px solid #909090;border-top:1px solid #fff;border-left:1px solid #fff;color:#aaa;font-size:9px;text-align:center;line-height:14px;font-family:'Liberation Sans'">v</div><div style="position:absolute;left:1520px;top:886px;width:20px;height:8px;background:#0000e0"></div><svg style="left:1524px;top:900px" width="11" height="11"><path d="M0.5 11V0.5H11" stroke="#707070" stroke-width="1.2" fill="none"/></svg><div class="t" style="left:1542px;top:899px;font-size:10.5px;color:#111;font-weight:400;font-family:'Liberation Sans', sans-serif;">Log</div><svg style="left:1568px;top:900px" width="11" height="11"><path d="M0.5 11V0.5H11" stroke="#b0b0b0" stroke-width="1.2" fill="none"/><path d="M2 5L4 8L9 2" stroke="#999" stroke-width="1.6" fill="none"/></svg><svg style="left:1524px;top:920px" width="11" height="11"><path d="M0.5 11V0.5H11" stroke="#707070" stroke-width="1.2" fill="none"/><path d="M2 5L4 8L9 2" stroke="#000" stroke-width="1.6" fill="none"/></svg><div class="t" style="left:1542px;top:919px;font-size:10.5px;color:#111;font-weight:400;font-family:'Liberation Sans', sans-serif;">Grid</div><svg style="left:1568px;top:920px" width="11" height="11"><path d="M0.5 11V0.5H11" stroke="#b0b0b0" stroke-width="1.2" fill="none"/></svg><div style="position:absolute;left:1512px;top:960px;width:79px;height:72px;box-sizing:border-box;border:1px solid #a0a0a0;box-shadow:inset 1px 1px 0 #fff, 1px 1px 0 #fff"></div><div style="position:absolute;left:1512px;top:1032px;width:79px;height:125px;box-sizing:border-box;border:1px solid #a0a0a0;box-shadow:inset 1px 1px 0 #fff, 1px 1px 0 #fff"></div><svg style="left:1520px;top:968px" width="11" height="11"><path d="M0.5 11V0.5H11" stroke="#707070" stroke-width="1.2" fill="none"/><path d="M2 5L4 8L9 2" stroke="#000" stroke-width="1.6" fill="none"/></svg><div class="t" style="left:1538px;top:967px;font-size:10.5px;color:#111;font-weight:400;font-family:'Liberation Sans', sans-serif;">Bold</div><svg style="left:1520px;top:984px" width="11" height="11"><path d="M0.5 11V0.5H11" stroke="#707070" stroke-width="1.2" fill="none"/></svg><div class="t" style="left:1538px;top:983px;font-size:10.5px;color:#111;font-weight:400;font-family:'Liberation Sans', sans-serif;">Markers</div><svg style="left:1520px;top:1000px" width="11" height="11"><path d="M0.5 11V0.5H11" stroke="#707070" stroke-width="1.2" fill="none"/></svg><div class="t" style="left:1538px;top:999px;font-size:10.5px;color:#111;font-weight:400;font-family:'Liberation Sans', sans-serif;">Log X</div><svg style="left:1520px;top:1016px" width="11" height="11"><path d="M0.5 11V0.5H11" stroke="#707070" stroke-width="1.2" fill="none"/></svg><div class="t" style="left:1538px;top:1015px;font-size:10.5px;color:#111;font-weight:400;font-family:'Liberation Sans', sans-serif;">Smooth</div><div style="position:absolute;left:1520px;top:1035px;width:21px;height:5px;box-sizing:border-box;border-right:2px solid #909090;border-bottom:2px solid #909090"></div><div style="position:absolute;left:1520px;top:1048px;width:21px;height:16px;box-sizing:border-box;border-right:2px solid #909090;border-bottom:2px solid #909090;border-top:1px solid #fff;border-left:1px solid #fff;color:#aaa;font-size:9px;text-align:center;line-height:14px;font-family:'Liberation Sans'">+</div><div style="position:absolute;left:1520px;top:1067px;width:21px;height:17px;box-sizing:border-box;border-right:2px solid #909090;border-bottom:2px solid #909090;border-top:1px solid #fff;border-left:1px solid #fff;color:#aaa;font-size:9px;text-align:center;line-height:14px;font-family:'Liberation Sans'">-</div><div style="position:absolute;left:1520px;top:1087px;width:21px;height:17px;box-sizing:border-box;border-right:2px solid #909090;border-bottom:2px solid #909090;border-top:1px solid #fff;border-left:1px solid #fff;color:#aaa;font-size:9px;text-align:center;line-height:14px;font-family:'Liberation Sans'">v</div><div style="position:absolute;left:1564px;top:1035px;width:21px;height:5px;box-sizing:border-box;border-right:2px solid #909090;border-bottom:2px solid #909090"></div><div style="position:absolute;left:1564px;top:1048px;width:21px;height:16px;box-sizing:border-box;border-right:2px solid #909090;border-bottom:2px solid #909090;border-top:1px solid #fff;border-left:1px solid #fff;color:#aaa;font-size:9px;text-align:center;line-height:14px;font-family:'Liberation Sans'">+</div><div style="position:absolute;left:1564px;top:1067px;width:21px;height:17px;box-sizing:border-box;border-right:2px solid #909090;border-bottom:2px solid #909090;border-top:1px solid #fff;border-left:1px solid #fff;color:#aaa;font-size:9px;text-align:center;line-height:14px;font-family:'Liberation Sans'">-</div><div style="position:absolute;left:1564px;top:1087px;width:21px;height:17px;box-sizing:border-box;border-right:2px solid #909090;border-bottom:2px solid #909090;border-top:1px solid #fff;border-left:1px solid #fff;color:#aaa;font-size:9px;text-align:center;line-height:14px;font-family:'Liberation Sans'">v</div><div style="position:absolute;left:1520px;top:1108px;width:20px;height:8px;background:#ee0000"></div><svg style="left:1524px;top:1121px" width="11" height="11"><path d="M0.5 11V0.5H11" stroke="#707070" stroke-width="1.2" fill="none"/><path d="M2 5L4 8L9 2" stroke="#000" stroke-width="1.6" fill="none"/></svg><div class="t" style="left:1542px;top:1120px;font-size:10.5px;color:#111;font-weight:400;font-family:'Liberation Sans', sans-serif;">Log</div><svg style="left:1568px;top:1121px" width="11" height="11"><path d="M0.5 11V0.5H11" stroke="#b0b0b0" stroke-width="1.2" fill="none"/><path d="M2 5L4 8L9 2" stroke="#999" stroke-width="1.6" fill="none"/></svg><svg style="left:1524px;top:1141px" width="11" height="11"><path d="M0.5 11V0.5H11" stroke="#707070" stroke-width="1.2" fill="none"/><path d="M2 5L4 8L9 2" stroke="#000" stroke-width="1.6" fill="none"/></svg><div class="t" style="left:1542px;top:1140px;font-size:10.5px;color:#111;font-weight:400;font-family:'Liberation Sans', sans-serif;">Grid</div><svg style="left:1568px;top:1141px" width="11" height="11"><path d="M0.5 11V0.5H11" stroke="#b0b0b0" stroke-width="1.2" fill="none"/></svg></body></html>
